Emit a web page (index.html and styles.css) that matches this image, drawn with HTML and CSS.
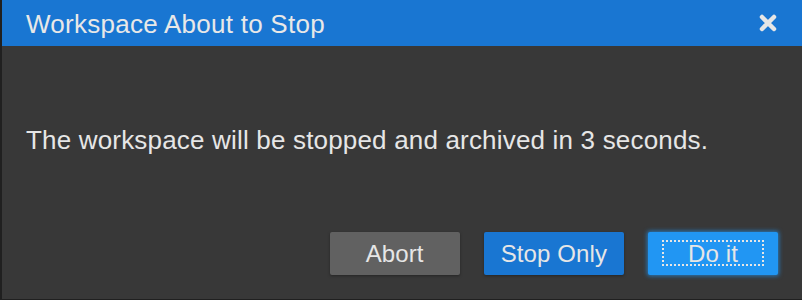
FILE: index.html
```html
<!DOCTYPE html>
<html>
<head>
<meta charset="utf-8">
<link rel="stylesheet" href="styles.css">
</head>
<body>
<div class="dialog">
  <div class="header">
    <span class="title">Workspace About to Stop</span>
    <svg class="close" width="18" height="18" viewBox="0 0 18 18"><path d="M3 3 L15 15 M15 3 L3 15" stroke="#e6e6e6" stroke-width="4.5" stroke-linecap="round"/></svg>
  </div>
  <div class="content">
    <p class="message">The workspace will be stopped and archived in 3 seconds.</p>
  </div>
  <div class="footer">
    <button class="btn btn-grey">Abort</button>
    <button class="btn btn-blue">Stop Only</button>
    <button class="btn btn-primary">Do it</button>
  </div>
</div>
</body>
</html>
```
FILE: styles.css
```css
html, body {
  margin: 0;
  padding: 0;
  background: #383838;
}
.dialog {
  width: 800px;
  height: 299px;
  border-left: 2px solid #202020;
  border-bottom: 1px solid #202020;
  background: #383838;
  display: flex;
  flex-direction: column;
  font-family: "Liberation Sans", Arial, sans-serif;
  color: #e6e6e6;
}
.header {
  height: 46px;
  background: #1976d2;
  display: flex;
  align-items: center;
  justify-content: space-between;
  padding: 0 25px 0 24px;
}
.title {
  font-size: 26px;
  line-height: 30px;
  letter-spacing: 0.26px;
  color: #e8e8e8;
  padding-top: 2px;
}
.close {
  display: block;
}
.content {
  flex: 1;
  padding: 79px 24px 0 24px;
}
.message {
  margin: 0;
  font-size: 26px;
  line-height: 30px;
  letter-spacing: 0.18px;
}
.footer {
  display: flex;
  justify-content: flex-end;
  gap: 24px;
  padding: 0 24px 24px 0;
}
.btn {
  position: relative;
  min-width: 130px;
  height: 43px;
  padding: 0 17px;
  border: none;
  border-radius: 2px;
  font-family: "Liberation Sans", Arial, sans-serif;
  font-size: 24px;
  line-height: 43px;
  letter-spacing: 0.1px;
  color: #e6e6e6;
}
.btn-grey {
  background: #616161;
  box-shadow: 0 1px 3px rgba(0,0,0,0.35);
}
.btn-blue {
  background: #1976d2;
  box-shadow: 0 1px 3px rgba(0,0,0,0.35);
}
.btn-primary {
  background: #2196f3;
  box-shadow: 0 0 4px 1px rgba(33,150,243,0.7);
}
.btn-primary::after {
  content: "";
  position: absolute;
  top: 8px;
  bottom: 9px;
  left: 14px;
  right: 14px;
  border: 2px dotted #e6e6e6;
}
```
